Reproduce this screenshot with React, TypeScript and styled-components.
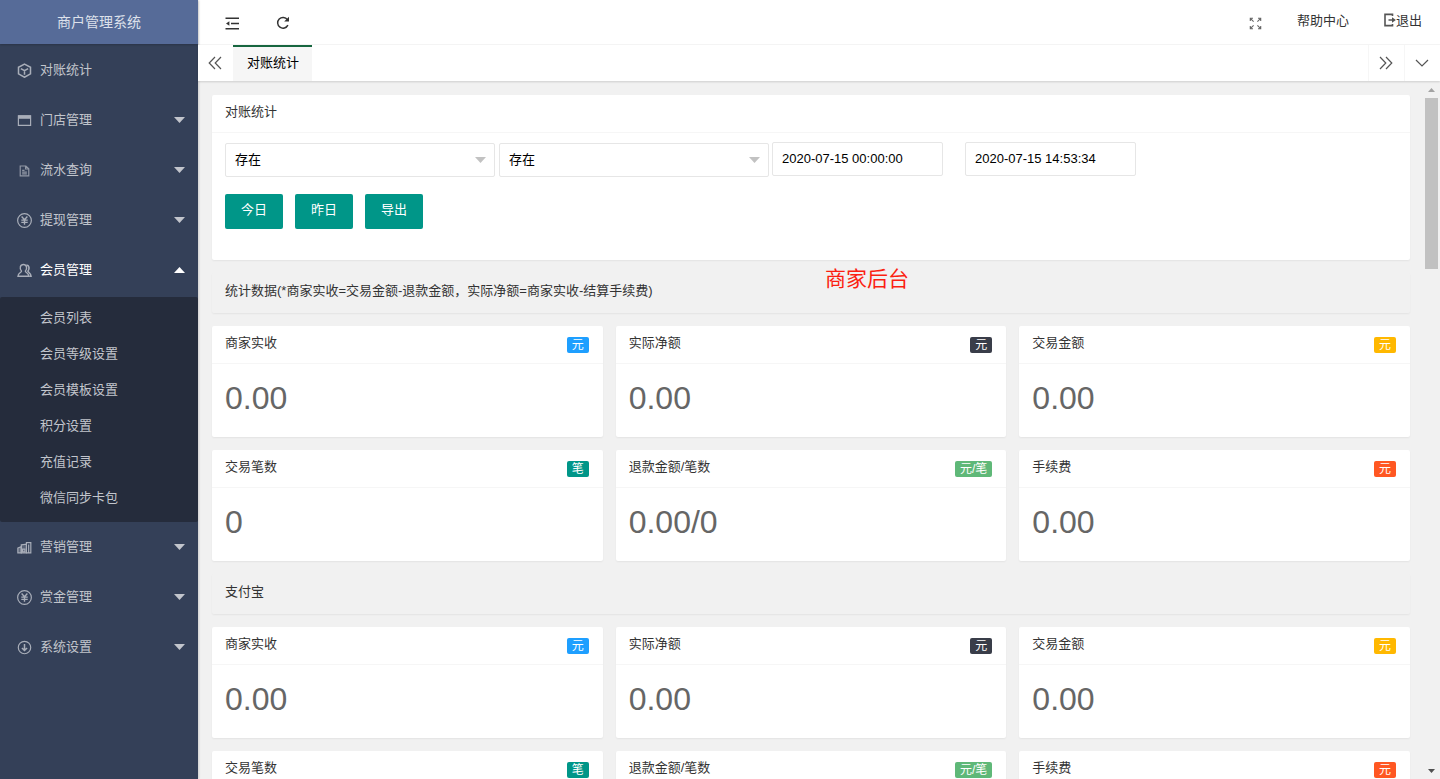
import React from "react";
import styled, { createGlobalStyle, css } from "styled-components";

const GlobalStyle = createGlobalStyle`
  *, *::before, *::after { box-sizing: border-box; }
  body {
    margin: 0;
    font: 13px/20px "Liberation Sans", "Noto Sans CJK SC", sans-serif;
    color: #333;
    background: #f1f1f1;
  }
  button, input, select { font: inherit; }
  ul, h1, h2, h3, p { margin: 0; padding: 0; font-size: inherit; font-weight: 400; list-style: none; }
  a { color: inherit; text-decoration: none; }
  svg { display: block; }
`;

const Shell = styled.div`
  display: flex;
  height: 100vh;
  overflow: hidden;
`;

const Sidebar = styled.aside`
  flex: none;
  width: 198px;
  background: #344058;
  color: #c2c5cc;
  box-shadow: 1px 0 2px rgba(0, 0, 0, 0.15);
  z-index: 1;
`;

const Brand = styled.h1`
  height: 44px;
  line-height: 44px;
  text-align: center;
  font-size: 14px;
  color: #dde1eb;
  background: #566b98;
  box-shadow: 0 1px 2px rgba(0, 0, 0, 0.2);
`;

const Menu = styled.ul`
  padding-top: 1px;
`;

const MenuLink = styled.a<{ $open?: boolean }>`
  display: flex;
  align-items: center;
  height: 50px;
  padding: 0 13px 0 17px;
  color: ${(p) => (p.$open ? "#fff" : "inherit")};
  > span {
    flex: 1;
    padding-left: 8px;
  }
  > svg:first-child {
    color: #a9aeb9;
  }
`;

const SubMenu = styled.ul`
  margin-top: 2px;
  padding: 3px 0 6px;
  background: #252c3c;
  border-radius: 2px;
`;

const SubLink = styled.a`
  display: block;
  height: 36px;
  line-height: 36px;
  padding-left: 40px;
`;

const Main = styled.div`
  flex: 1;
  min-width: 0;
  display: flex;
  flex-direction: column;
`;

const TopBar = styled.header`
  flex: none;
  display: flex;
  align-items: center;
  justify-content: space-between;
  height: 45px;
  padding: 0 18px 2px 27px;
  background: #fff;
  border-bottom: 1px solid #f6f6f6;
`;

const Tools = styled.div<{ $gap: number }>`
  display: flex;
  align-items: center;
  gap: ${(p) => p.$gap}px;
`;

const IconButton = styled.button`
  display: grid;
  place-items: center;
  padding: 4px 0 0;
  border: 0;
  background: none;
  color: #333;
`;

const TopLink = styled.a`
  display: flex;
  align-items: center;
  height: 40px;
  > svg {
    color: #555;
    margin-bottom: 2px;
  }
`;

const TabBar = styled.nav`
  flex: none;
  display: flex;
  height: 36px;
  background: #fff;
  box-shadow: 0 1px 2px rgba(0, 0, 0, 0.15);
  z-index: 1;
`;

const TabControl = styled.button<{ $divided?: boolean }>`
  display: grid;
  place-items: center;
  width: ${(p) => (p.$divided ? 36 : 35)}px;
  padding: 0 1px 0 0;
  border: 0;
  ${(p) => p.$divided && css`border-left: 1px solid #f6f6f6;`}
  background: none;
  color: #555;
`;

const Tab = styled.a`
  height: 36px;
  padding: 0 13px 0 14px;
  line-height: 32px;
  color: #000;
  background: #f6f6f6;
  border-top: 2px solid #17663f;
  margin-right: auto;
`;

const Viewport = styled.div`
  flex: 1;
  min-height: 0;
  display: flex;
`;

const Content = styled.main`
  flex: 1;
  min-width: 0;
  padding: 14px 13px 14px 14px;
  overflow-y: auto;
  scrollbar-width: none;
  display: flex;
  flex-direction: column;
  gap: 13px;
  > * {
    flex: none;
  }
`;

const Rail = styled.div`
  flex: none;
  width: 17px;
  display: flex;
  flex-direction: column;
  align-items: center;
`;

const RailButton = styled.button`
  display: grid;
  place-items: center;
  width: 17px;
  height: 17px;
  padding: 0;
  border: 0;
  background: none;
`;

const RailTrack = styled.div`
  flex: 1;
`;

const RailThumb = styled.div`
  width: 13px;
  height: 171px;
  background: #c1c1c1;
`;

const Card = styled.section`
  background: #fff;
  border-radius: 2px;
  box-shadow: 0 1px 2px rgba(0, 0, 0, 0.06);
`;

const CardHead = styled.header`
  display: flex;
  justify-content: space-between;
  align-items: center;
  height: 38px;
  padding: 0 14px 3px 13px;
  border-bottom: 1px solid #f6f6f6;
`;

const FilterBody = styled.form`
  padding: 9px 13px 31px;
`;

const Fields = styled.div`
  display: flex;
  align-items: flex-start;
  margin-bottom: 17px;
`;

const SelectBox = styled.label`
  position: relative;
  width: 270px;
  margin: 1px 4px 0 0;
  & + & {
    margin-right: 3px;
  }
  > svg {
    position: absolute;
    right: 9px;
    top: 14px;
    color: #c2c2c2;
    pointer-events: none;
  }
`;

const field = css`
  height: 34px;
  padding: 0 9px;
  color: #000;
  background: #fff;
  border: 1px solid #e6e6e6;
  border-radius: 2px;
`;

const Select = styled.select`
  ${field}
  width: 100%;
  appearance: none;
`;

const DateInput = styled.input`
  ${field}
  width: 171px;
  margin-right: 22px;
  padding-bottom: 2px;
`;

const Buttons = styled.div`
  display: flex;
  gap: 12px;
`;

const Button = styled.button`
  width: 58px;
  height: 35px;
  padding: 0 0 3px;
  border: 0;
  border-radius: 2px;
  color: #fff;
  background: #009688;
`;

const SectionBar = styled.h2`
  height: 40px;
  padding: 0 13px;
  line-height: 36px;
  border-radius: 2px;
  box-shadow: 0 1px 2px rgba(0, 0, 0, 0.06);
`;

const StatGrid = styled.div`
  display: grid;
  grid-template-columns: repeat(3, 1fr);
  gap: 13px;
`;

const StatValue = styled.p`
  height: 73px;
  padding: 0 13px;
  line-height: 68px;
  font-size: 32px;
  color: #666;
`;

const Badge = styled.span<{ $color: string }>`
  height: 16px;
  margin-top: 3px;
  padding: 0 5px;
  line-height: 16px;
  font-size: 12px;
  color: #fff;
  background: ${(p) => p.$color};
  border-radius: 2px;
`;

const Watermark = styled.div`
  position: absolute;
  top: 264px;
  left: 825px;
  line-height: 30px;
  font-size: 21px;
  color: #fb1f12;
  pointer-events: none;
  z-index: 2;
`;

const Triangle = ({ up = false }: { up?: boolean }) => (
  <svg width="11" height="6" viewBox="0 0 11 6" fill="currentColor">
    <path d={up ? "M0 6L5.5 0L11 6z" : "M0 0H11L5.5 6z"} />
  </svg>
);

const glyphs: Record<string, React.ReactNode> = {
  cube: <path d="M7 1L12.6 4V10.2L7 13.3L1.4 10.2V4zM3.6 5.2L7 7.2L10.4 5.2M7 7.2V11" strokeWidth="1.4" />,
  window: (
    <>
      <path d="M1.3 2.7H12.7V11.6H1.3z" />
      <path d="M1 2.2H13V5.4H1z" fill="currentColor" stroke="none" />
    </>
  ),
  file: (
    <path d="M3 2.8H8.3L11 5.4V12H3zM8 3V5.6H11M4.8 6.8H7M4.8 8.5H9.2M4.8 10.2H9.2" opacity="0.8" />
  ),
  yen: (
    <>
      <circle cx="7" cy="7" r="6.4" />
      <path d="M4.3 3.3L7 6.2L9.7 3.3M4 6.6H10M4 8.7H10M7 6.2V11" strokeWidth="1.3" />
    </>
  ),
  users: (
    <>
      <path d="M4.2 7.6C2 5 3 1.4 6 1.4S10 5 7.8 7.6C7.6 8.8 11 9.3 11 12.4H.9C.9 9.3 4.4 8.8 4.2 7.6z" strokeWidth="1.3" />
      <path d="M8.8 1.8C11.4 2 12 5.4 10.2 7.6C10.4 8.8 13 9.4 13.1 12.4H11.4" strokeWidth="1.5" />
    </>
  ),
  chart: (
    <>
      <path d="M.8 7.5L4 6.2V12H.8z" fill="currentColor" fillOpacity="0.4" />
      <path d="M4 4.5L8.8 3.8V12H4z" fill="currentColor" fillOpacity="0.3" />
      <path d="M8.8 3.8V2.4H12.9V12H8.8M10.9 4.2V12M5.2 8.5H7.4V11H5.2z" />
    </>
  ),
  down: (
    <>
      <circle cx="7" cy="7" r="5.8" />
      <path d="M7 3.8V10M4.6 7.4L7 9.8L9.4 7.4" strokeWidth="1.4" />
    </>
  ),
};

const MenuIcon = ({ name }: { name: string }) => (
  <svg width="15" height="15" viewBox="0 0 14 14" fill="none" stroke="currentColor" strokeWidth="1.1">
    {glyphs[name]}
  </svg>
);

type MenuEntry = { icon: string; label: string; leaf?: boolean; children?: string[] };

const menu: MenuEntry[] = [
  { icon: "cube", label: "对账统计", leaf: true },
  { icon: "window", label: "门店管理" },
  { icon: "file", label: "流水查询" },
  { icon: "yen", label: "提现管理" },
  {
    icon: "users",
    label: "会员管理",
    children: ["会员列表", "会员等级设置", "会员模板设置", "积分设置", "充值记录", "微信同步卡包"],
  },
  { icon: "chart", label: "营销管理" },
  { icon: "yen", label: "赏金管理" },
  { icon: "down", label: "系统设置" },
];

const stats = [
  { title: "商家实收", unit: "元", color: "#1e9fff", value: "0.00" },
  { title: "实际净额", unit: "元", color: "#393d49", value: "0.00" },
  { title: "交易金额", unit: "元", color: "#ffb800", value: "0.00" },
  { title: "交易笔数", unit: "笔", color: "#009688", value: "0" },
  { title: "退款金额/笔数", unit: "元/笔", color: "#5fb878", value: "0.00/0" },
  { title: "手续费", unit: "元", color: "#ff5722", value: "0.00" },
];

const Stats = () => (
  <StatGrid>
    {stats.map((s) => (
      <Card key={s.title}>
        <CardHead>
          <h3>{s.title}</h3>
          <Badge $color={s.color}>{s.unit}</Badge>
        </CardHead>
        <StatValue>{s.value}</StatValue>
      </Card>
    ))}
  </StatGrid>
);

const FilterSelect = ({ label }: { label: string }) => (
  <SelectBox>
    <Select aria-label={label}>
      <option>存在</option>
    </Select>
    <Triangle />
  </SelectBox>
);

export default function App() {
  return (
    <Shell>
      <GlobalStyle />
      <Sidebar>
        <Brand>商户管理系统</Brand>
        <Menu>
          {menu.map((m) => (
            <li key={m.label}>
              <MenuLink href="#" $open={!!m.children}>
                <MenuIcon name={m.icon} />
                <span>{m.label}</span>
                {!m.leaf && <Triangle up={!!m.children} />}
              </MenuLink>
              {m.children && (
                <SubMenu>
                  {m.children.map((c) => (
                    <li key={c}>
                      <SubLink href="#">{c}</SubLink>
                    </li>
                  ))}
                </SubMenu>
              )}
            </li>
          ))}
        </Menu>
      </Sidebar>
      <Main>
        <TopBar>
          <Tools $gap={36}>
            <IconButton aria-label="收起菜单">
              <svg width="15" height="13" viewBox="0 0 15 13" fill="none" stroke="currentColor" strokeWidth="1.4">
                <path d="M.5 1.2H14M6 6.5H14M.5 11.8H14" />
                <path d="M4.4 4.2V8.8L1 6.5z" fill="currentColor" stroke="none" />
              </svg>
            </IconButton>
            <IconButton aria-label="刷新">
              <svg width="14" height="14" viewBox="0 0 14 14" fill="none" stroke="currentColor" strokeWidth="1.5">
                <path d="M11.9 9.2A5.4 5.4 0 1 1 11.4 3.6" />
                <path d="M13 .8V5.6H8.2z" fill="currentColor" stroke="none" />
              </svg>
            </IconButton>
          </Tools>
          <Tools $gap={35}>
            <IconButton aria-label="全屏">
              <svg width="13" height="13" viewBox="0 0 13 13" fill="none" stroke="#666" strokeWidth="1.1">
                <path d="M1.3 4V1.3H4M1.3 1.3L4.6 4.6M9 1.3H11.7V4M11.7 1.3L8.4 4.6M1.3 9V11.7H4M1.3 11.7L4.6 8.4M11.7 9V11.7H9M11.7 11.7L8.4 8.4" />
              </svg>
            </IconButton>
            <TopLink href="#">帮助中心</TopLink>
            <TopLink href="#">
              <svg width="12" height="14" viewBox="0 0 12 14" fill="none" stroke="currentColor" strokeWidth="1.6">
                <path d="M8.5 3V1.4H1V12.6H8.5V11M4.5 7H9" />
                <path d="M8 4.2L11.9 7L8 9.8z" fill="currentColor" stroke="none" />
              </svg>
              退出
            </TopLink>
          </Tools>
        </TopBar>
        <TabBar>
          <TabControl aria-label="向左">
            <svg width="14" height="14" viewBox="0 0 14 14" fill="none" stroke="currentColor" strokeWidth="1.2">
              <path d="M7 1L1.2 7L7 13M13 1L7.2 7L13 13" />
            </svg>
          </TabControl>
          <Tab href="#">对账统计</Tab>
          <TabControl aria-label="向右" $divided>
            <svg width="14" height="14" viewBox="0 0 14 14" fill="none" stroke="currentColor" strokeWidth="1.2">
              <path d="M1 1L6.8 7L1 13M7 1L12.8 7L7 13" />
            </svg>
          </TabControl>
          <TabControl aria-label="更多" $divided>
            <svg width="14" height="8" viewBox="0 0 14 8" fill="none" stroke="currentColor" strokeWidth="1.2">
              <path d="M1 1L7 7L13 1" />
            </svg>
          </TabControl>
        </TabBar>
        <Viewport>
          <Content>
            <Card>
              <CardHead>
                <h2>对账统计</h2>
              </CardHead>
              <FilterBody>
                <Fields>
                  <FilterSelect label="门店" />
                  <FilterSelect label="员工" />
                  <DateInput aria-label="开始时间" defaultValue="2020-07-15 00:00:00" />
                  <DateInput aria-label="结束时间" defaultValue="2020-07-15 14:53:34" />
                </Fields>
                <Buttons>
                  <Button type="button">今日</Button>
                  <Button type="button">昨日</Button>
                  <Button type="button">导出</Button>
                </Buttons>
              </FilterBody>
            </Card>
            <SectionBar>统计数据(*商家实收=交易金额-退款金额，实际净额=商家实收-结算手续费)</SectionBar>
            <Stats />
            <SectionBar>支付宝</SectionBar>
            <Stats />
          </Content>
          <Rail>
            <RailButton aria-label="向上滚动">
              <svg width="7" height="4" viewBox="0 0 7 4" fill="#a3a3a3">
                <path d="M0 4L3.5 0L7 4z" />
              </svg>
            </RailButton>
            <RailTrack>
              <RailThumb />
            </RailTrack>
            <RailButton aria-label="向下滚动">
              <svg width="7" height="4" viewBox="0 0 7 4" fill="#505050">
                <path d="M0 0L3.5 4L7 0z" />
              </svg>
            </RailButton>
          </Rail>
        </Viewport>
      </Main>
      <Watermark>商家后台</Watermark>
    </Shell>
  );
}
